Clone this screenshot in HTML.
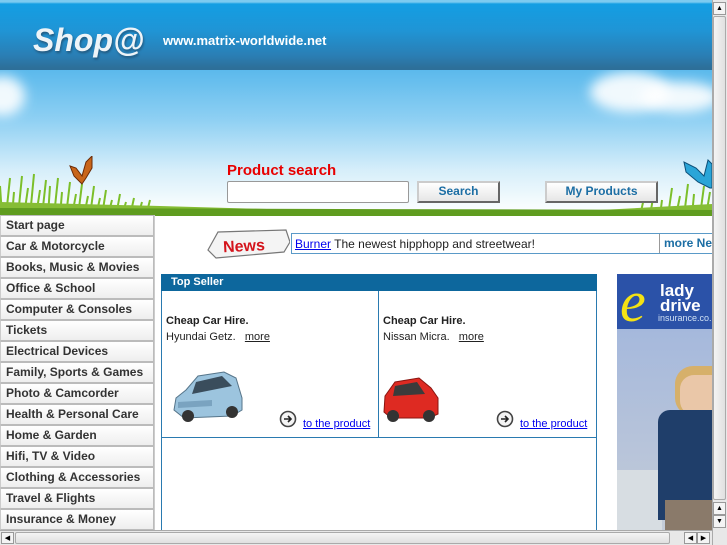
<!DOCTYPE html>
<html><head><style>
*{margin:0;padding:0;box-sizing:border-box}
body{width:727px;height:545px;overflow:hidden;position:relative;background:#fff;font-family:"Liberation Sans",sans-serif}
.abs{position:absolute}
#hdr{left:0;top:0;width:712px;height:70px;background:linear-gradient(#7ccbf0 0,#7ccbf0 2px,#139ee3 4px,#1f95d6 30px,#2a7fb5 55px,#2d6f99 68px,#2d6f99 70px)}
#sky{left:0;top:70px;width:712px;height:146px;background:linear-gradient(#5bb9ec 0,#8fd0f3 50px,#d6eefa 100px,#f2fafd 130px,#fff 146px);overflow:hidden}
.cloud{position:absolute;background:#fff;border-radius:50%;filter:blur(6px);opacity:.9}
.side{left:0;width:154px;height:21px;border:1px solid #bbb;border-left:1px solid #ccc;background:linear-gradient(#fff,#eee);font-weight:bold;font-size:12px;color:#333;padding:2px 0 0 5px}
.btn{border:2px solid #666;border-top-color:#ccc;border-left-color:#ccc;background:linear-gradient(#fff,#e6e6e6);color:#1c6ea4;font-weight:bold;font-size:12px;text-align:center;line-height:17px}
a{color:#00e;}
</style></head><body>
<div id="hdr" class="abs"></div>
<div class="abs" style="left:33px;top:22px;font:italic bold 32px 'Liberation Sans',sans-serif;color:#eef4f8;text-shadow:1px 2px 2px #235a80">Shop@</div>
<div class="abs" style="left:163px;top:33px;font-size:13px;font-weight:bold;color:#fff">www.matrix-worldwide.net</div>
<div id="sky" class="abs">
<div class="cloud" style="left:-20px;top:6px;width:45px;height:40px"></div>
<div class="cloud" style="left:590px;top:2px;width:80px;height:40px"></div>
<div class="cloud" style="left:640px;top:12px;width:80px;height:30px"></div>
</div>
<svg class="abs" style="left:0;top:172px" width="712" height="44">
<g stroke="#7cbf2a" stroke-width="2" fill="none">
<path d="M2 44 L0 14 M6 44 L10 6 M12 44 L14 20 M18 44 L22 4 M24 44 L28 16 M30 44 L34 2 M36 44 L40 18 M42 44 L46 8 M48 44 L50 14 M54 44 L58 6 M60 44 L62 20 M66 44 L70 10 M72 44 L76 22 M78 44 L82 12 M84 44 L88 24 M90 44 L94 14 M96 44 L100 26 M102 44 L106 18 M108 44 L112 28 M116 44 L120 22 M122 44 L126 30 M130 44 L134 26 M138 44 L142 30 M146 44 L150 28"/>
<path d="M640 44 L644 26 M650 44 L654 20 M660 44 L662 28 M668 44 L672 16 M676 44 L680 24 M684 44 L688 12 M692 44 L694 22 M700 44 L704 14 M706 44 L710 20"/>
</g>
<path d="M0 44 L0 30 L160 34 L300 38 L600 38 L712 32 L712 44Z" fill="#86bd35"/>
<path d="M0 44 L0 36 L712 38 L712 44Z" fill="#5f9c1f"/>
</svg>
<svg class="abs" style="left:68px;top:156px" width="28" height="30"><path d="M14 28 L6 20 L2 10 L8 12 L14 20 L18 6 L24 0 L24 12 L18 22Z" fill="#c8651a" stroke="#6b2a05"/></svg>
<svg class="abs" style="left:682px;top:158px" width="30" height="34"><path d="M28 30 L16 24 L4 14 L2 4 L14 10 L22 18 L26 2 L30 6 L30 30Z" fill="#2aa5d8" stroke="#0c4f78"/></svg>
<div class="abs" style="left:227px;top:162px;color:#e80000;font-weight:bold;font-size:15px">Product search</div>
<div class="abs" style="left:227px;top:181px;width:182px;height:22px;border:1px solid #999;border-radius:2px;background:#fff"></div>
<div class="abs btn" style="left:417px;top:181px;width:83px;height:22px">Search</div>
<div class="abs btn" style="left:545px;top:181px;width:113px;height:22px">My Products</div>

<div class="abs" style="left:0;top:215px;width:155px;height:315px;border-right:1px solid #ccc"></div>
<div class="abs side" style="top:215px">Start page</div>
<div class="abs side" style="top:236px">Car &amp; Motorcycle</div>
<div class="abs side" style="top:257px">Books, Music &amp; Movies</div>
<div class="abs side" style="top:278px">Office &amp; School</div>
<div class="abs side" style="top:299px">Computer &amp; Consoles</div>
<div class="abs side" style="top:320px">Tickets</div>
<div class="abs side" style="top:341px">Electrical Devices</div>
<div class="abs side" style="top:362px">Family, Sports &amp; Games</div>
<div class="abs side" style="top:383px">Photo &amp; Camcorder</div>
<div class="abs side" style="top:404px">Health &amp; Personal Care</div>
<div class="abs side" style="top:425px">Home &amp; Garden</div>
<div class="abs side" style="top:446px">Hifi, TV &amp; Video</div>
<div class="abs side" style="top:467px">Clothing &amp; Accessories</div>
<div class="abs side" style="top:488px">Travel &amp; Flights</div>
<div class="abs side" style="top:509px">Insurance &amp; Money</div>

<svg class="abs" style="left:206px;top:228px" width="84" height="34"><path d="M12 4 L80 2 L84 14 L78 24 L10 30 L2 22Z" fill="#f4f4f4" stroke="#777" stroke-width="1.2"/><text x="17" y="23" font-family="Liberation Sans" font-weight="bold" font-size="16" fill="#d4141c" transform="rotate(-3 42 17)">News</text></svg>
<div class="abs" style="left:291px;top:233px;width:421px;height:21px;border:1px solid #5a9ac8;font-size:12px;padding:3px 0 0 3px;color:#222"><a href="#">Burner</a> The newest hipphopp and streetwear!</div>
<div class="abs" style="left:659px;top:234px;width:53px;height:19px;border-left:1px solid #999;background:#fff;color:#1c6ea4;font-weight:bold;font-size:12px;padding:2px 0 0 4px;white-space:nowrap;overflow:hidden">more News</div>

<div class="abs" style="left:161px;top:274px;width:436px;height:256px;border:1px solid #2a7ab0;border-bottom:none"></div>
<div class="abs" style="left:161px;top:274px;width:436px;height:17px;background:#0d679d;color:#fff;font-weight:bold;font-size:11px;padding:2px 0 0 10px">Top Seller</div>
<div class="abs" style="left:378px;top:291px;width:1px;height:147px;background:#2a7ab0"></div>
<div class="abs" style="left:161px;top:437px;width:436px;height:1px;background:#2a7ab0"></div>

<div class="abs" style="left:166px;top:313px;font-size:11px;color:#222;line-height:16px"><b>Cheap Car Hire.</b><br>Hyundai Getz. &nbsp; <u>more</u></div>
<div class="abs" style="left:383px;top:313px;font-size:11px;color:#222;line-height:16px"><b>Cheap Car Hire.</b><br>Nissan Micra. &nbsp; <u>more</u></div>
<svg class="abs" style="left:172px;top:368px" width="72" height="56"><path d="M2 42 L4 30 L14 22 L26 8 L52 4 L64 10 L70 30 L70 42 L60 48 L12 50Z" fill="#9cc4de" stroke="#56758a"/><path d="M24 14 L50 8 L60 18 L20 26Z" fill="#3a4d5c"/><path d="M6 34 L40 32 L40 38 L6 40Z" fill="#7aa3c0"/><circle cx="16" cy="48" r="6" fill="#333"/><circle cx="60" cy="44" r="6" fill="#333"/></svg>
<svg class="abs" style="left:383px;top:372px" width="56" height="52"><path d="M1 40 L2 24 L12 10 L36 6 L48 16 L55 26 L55 42 L46 46 L8 46Z" fill="#de2a22" stroke="#8a1510"/><path d="M12 14 L34 10 L42 22 L10 24Z" fill="#3b3b3b"/><circle cx="10" cy="44" r="6" fill="#333"/><circle cx="46" cy="44" r="6" fill="#333"/></svg>
<svg class="abs" style="left:279px;top:410px" width="18" height="18"><circle cx="9" cy="9" r="7.5" fill="#f4f4f4" stroke="#444" stroke-width="1.6"/><path d="M5 9 H12 M9 6 L12 9 L9 12" stroke="#222" stroke-width="1.6" fill="none"/></svg>
<svg class="abs" style="left:496px;top:410px" width="18" height="18"><circle cx="9" cy="9" r="7.5" fill="#f4f4f4" stroke="#444" stroke-width="1.6"/><path d="M5 9 H12 M9 6 L12 9 L9 12" stroke="#222" stroke-width="1.6" fill="none"/></svg>
<div class="abs" style="left:303px;top:418px;font-size:11px"><a href="#">to the product</a></div>
<div class="abs" style="left:520px;top:418px;font-size:11px"><a href="#">to the product</a></div>

<div class="abs" style="left:617px;top:274px;width:95px;height:256px;background:linear-gradient(#8da8d6,#a6b9dc 60px,#c4ccd8)"></div>
<div class="abs" style="left:617px;top:274px;width:95px;height:55px;background:#2b52a8"></div>
<div class="abs" style="left:620px;top:268px;font:italic 58px 'Liberation Serif',serif;color:#f4e214">e</div>
<div class="abs" style="left:660px;top:283px;font-weight:bold;font-size:17px;color:#fff;line-height:15px">lady<br>drive</div>
<div class="abs" style="left:658px;top:313px;font-size:9px;color:#cfe0f4">insurance.co.</div>
<div class="abs" style="left:617px;top:470px;width:45px;height:60px;background:#d7dde2"></div>
<div class="abs" style="left:675px;top:366px;width:37px;height:50px;background:#d6b06a;border-radius:18px 0 0 18px"></div>
<div class="abs" style="left:680px;top:375px;width:32px;height:40px;background:#eac7a8;border-radius:14px 0 0 14px"></div>
<div class="abs" style="left:658px;top:410px;width:54px;height:110px;background:#1f3e6a;border-radius:12px 0 0 0"></div>
<div class="abs" style="left:665px;top:500px;width:47px;height:30px;background:#8a7a6a"></div>

<div class="abs" style="left:712px;top:0;width:15px;height:545px;background:#e8e8e8;border-left:1px solid #aaa"></div>
<div class="abs" style="left:713px;top:2px;width:13px;height:13px;background:#f4f4f4;border:1px solid #999;font-size:7px;text-align:center;line-height:12px">▲</div>
<div class="abs" style="left:713px;top:16px;width:13px;height:484px;background:linear-gradient(90deg,#f4f4f4,#e0e0e0);border:1px solid #aaa;border-radius:2px"></div>
<div class="abs" style="left:713px;top:502px;width:13px;height:13px;background:#f4f4f4;border:1px solid #999;font-size:7px;text-align:center;line-height:12px">▲</div>
<div class="abs" style="left:713px;top:515px;width:13px;height:13px;background:#f4f4f4;border:1px solid #999;font-size:7px;text-align:center;line-height:12px">▼</div>
<div class="abs" style="left:0;top:530px;width:712px;height:15px;background:#e8e8e8;border-top:1px solid #aaa"></div>
<div class="abs" style="left:1px;top:532px;width:13px;height:12px;background:#f4f4f4;border:1px solid #999;font-size:7px;text-align:center;line-height:11px">◀</div>
<div class="abs" style="left:15px;top:532px;width:655px;height:12px;background:linear-gradient(#f4f4f4,#e0e0e0);border:1px solid #aaa;border-radius:2px"></div>
<div class="abs" style="left:684px;top:532px;width:13px;height:12px;background:#f4f4f4;border:1px solid #999;font-size:7px;text-align:center;line-height:11px">◀</div>
<div class="abs" style="left:697px;top:532px;width:13px;height:12px;background:#f4f4f4;border:1px solid #999;font-size:7px;text-align:center;line-height:11px">▶</div>
</body></html>
